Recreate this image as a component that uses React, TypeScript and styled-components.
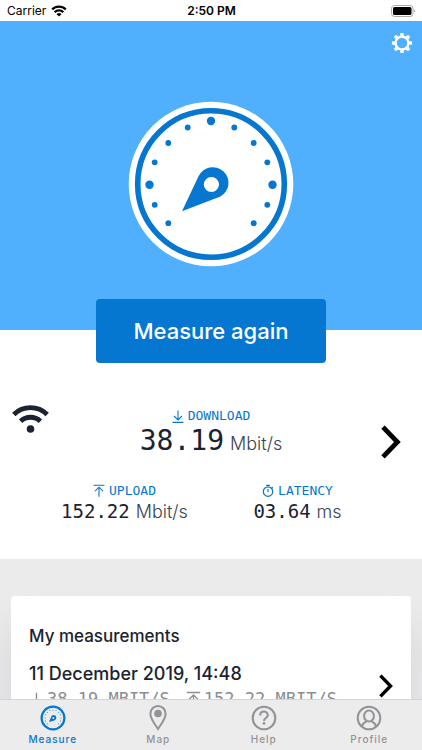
import React from "react";
import styled, { createGlobalStyle } from "styled-components";

const sans = `"Inter", "Liberation Sans", sans-serif`;
const mono = `"DejaVu Sans Mono", "Liberation Mono", monospace`;
const blue = "#0577d0";
const ink = "#1b2330";

const GlobalStyle = createGlobalStyle`
  *, *::before, *::after { box-sizing: border-box; }
  body { margin: 0; background: #ffffff; color: ${ink}; font-family: ${sans}; }
  button { border: 0; padding: 0; background: none; color: inherit; font: inherit; cursor: pointer; }
  h2, h3, p, dl, dt, dd { margin: 0; font: inherit; }
  svg { display: block; flex: none; }
`;

const Screen = styled.div`
  display: flex;
  flex-direction: column;
  height: 100vh;
  overflow: hidden;
`;

const StatusBar = styled.div`
  flex: none;
  display: grid;
  grid-template-columns: 1fr auto 1fr;
  align-items: center;
  height: 21px;
  padding: 0 6px 0 7px;
  background: #ffffff;
  color: #000000;
  font-size: 12px;
  line-height: 20px;
`;

const Carrier = styled.div`
  display: flex;
  align-items: center;
  gap: 5px;
`;

const Clock = styled.div`
  font-weight: 600;
`;

const BatterySlot = styled.div`
  display: flex;
  justify-content: flex-end;
`;

const Content = styled.main`
  flex: 1;
  min-height: 0;
  overflow: hidden;
  background: #ebebeb;
`;

const Hero = styled.section`
  display: flex;
  flex-direction: column;
  align-items: center;
  height: 309px;
  background: #50b0fe;
`;

const HeroBar = styled.div`
  align-self: stretch;
  display: flex;
  justify-content: flex-end;
  padding: 11px 9px 0;
  margin-bottom: 47px;
`;

const SettingsButton = styled.button`
  color: #ffffff;
`;

const Results = styled.section`
  display: flex;
  flex-direction: column;
  align-items: center;
  height: 229px;
  background: #ffffff;
`;

const MeasureButton = styled.button`
  flex: none;
  width: 230px;
  height: 64px;
  margin-top: -31px;
  border-radius: 4px;
  background: ${blue};
  color: #ffffff;
  font-size: 22px;
  font-weight: 500;
  line-height: 32px;
`;

const ResultRow = styled.div`
  align-self: stretch;
  display: grid;
  grid-template-columns: 38px 1fr 38px;
  padding: 41px 12px 0;
`;

const DetailsButton = styled.button`
  display: flex;
  align-self: start;
  justify-self: start;
  margin: 21px 0 0 9px;
  color: #000000;
`;

const Readings = styled.dl`
  display: grid;
  grid-template-columns: 1fr 1fr;
  column-gap: 24px;
  row-gap: 22px;
  padding-top: 4px;
`;

const Reading = styled.div<{ $main?: boolean }>`
  grid-column: ${({ $main }) => ($main ? "1 / -1" : "auto")};
  text-align: center;
`;

const ReadingLabel = styled.dt`
  display: flex;
  align-items: center;
  justify-content: center;
  gap: 4px;
  color: ${blue};
  font-family: ${mono};
  font-size: 13px;
  line-height: 16px;
`;

const ReadingValue = styled.dd<{ $main?: boolean }>`
  display: flex;
  align-items: baseline;
  justify-content: center;
  gap: 6px;
  font-family: ${mono};
  font-size: ${({ $main }) => ($main ? "28px" : "19px")};
  line-height: ${({ $main }) => ($main ? "34px" : "24px")};
  white-space: nowrap;
`;

const Unit = styled.span`
  color: #3d434e;
  font-family: ${sans};
  font-size: 18px;
  font-weight: 300;
`;

const History = styled.section`
  padding: 37px 11px 0 11px;
`;

const Card = styled.div`
  padding: 29px 18px 24px;
  border-radius: 4px;
  background: #ffffff;
  box-shadow: 0 32px 40px rgba(40, 50, 80, 0.12);
`;

const CardTitle = styled.h2`
  font-size: 17px;
  font-weight: 500;
  line-height: 22px;
`;

const Entry = styled.div`
  display: flex;
  justify-content: space-between;
  align-items: center;
  margin-top: 16px;
`;

const EntryDate = styled.h3`
  font-size: 18px;
  font-weight: 500;
  line-height: 22px;
`;

const EntryStats = styled.p`
  display: flex;
  gap: 16px;
  padding-top: 4px;
  color: #8b8e93;
  font-family: ${mono};
  font-size: 17px;
  line-height: 20px;
  white-space: nowrap;
`;

const EntryStat = styled.span`
  display: flex;
  align-items: center;
  gap: 3px;
`;

const EntryButton = styled.button`
  color: #000000;
`;

const TabBar = styled.nav`
  position: relative;
  flex: none;
  display: grid;
  grid-template-columns: repeat(4, 1fr);
  height: 51px;
  border-top: 1px solid #d4d4d4;
  background: #ececec;
`;

const Tab = styled.a<{ $active?: boolean }>`
  display: flex;
  flex-direction: column;
  align-items: center;
  gap: 2px;
  padding-top: 5px;
  color: ${({ $active }) => ($active ? blue : "#929397")};
  font-size: 10px;
  font-weight: 500;
  line-height: 12px;
  letter-spacing: 1px;
  text-decoration: none;
`;

const polar = (deg: number, r: number) => {
  const a = (deg * Math.PI) / 180;
  return { cx: Math.sin(a) * r, cy: -Math.cos(a) * r };
};

const Gauge = () => (
  <svg width="166" height="166" viewBox="-83 -83 166 166" aria-hidden="true">
    <circle r="82.3" fill="#fff" />
    <circle r="73.3" fill="none" stroke={blue} strokeWidth="5.6" />
    {[-90, 0, 90].map((d) => (
      <circle key={d} {...polar(d, 61.5)} cy={d === 0 ? -63 : 0.8} r="4.2" fill={blue} />
    ))}
    {[
      [23.3, -56.5],
      [42.7, -41],
      [56.3, -21.7],
      [56.3, 20.8],
      [42.7, 39.2],
    ].map(([x, y]) => (
      <g key={y} fill={blue}>
        <circle cx={x} cy={y} r="2.9" />
        <circle cx={-x} cy={y} r="2.9" />
      </g>
    ))}
    <path
      fill={blue}
      fillRule="evenodd"
      d="M-29 27.2L-12.6-7.4A15.7 15.7 0 1 1 9.4 12.6ZM.4-7.1a7.6 7.6 0 1 0 0 15.2a7.6 7.6 0 1 0 0-15.2Z"
    />
  </svg>
);

const StatusWifi = () => (
  <svg width="16" height="12" viewBox="0 0 16 12" aria-hidden="true">
    <path fill="none" stroke="#000" strokeWidth="2.3" d="M1.2 4.4a9.7 9.7 0 0 1 13.6 0M3.7 7.2a6.1 6.1 0 0 1 8.6 0" />
    <path d="M8 11.6L5.5 9.2a3.6 3.6 0 0 1 5 0Z" />
  </svg>
);

const Battery = () => (
  <svg width="25" height="12" viewBox="0 0 25 12" aria-hidden="true">
    <rect x=".5" y=".5" width="21.5" height="11" rx="3" fill="#fff" stroke="#aaa" />
    <rect x="2" y="2" width="18.5" height="8" rx="1.6" />
    <path d="M23.3 4.2q1.5 1.8 0 3.6Z" fill="#777" />
  </svg>
);

const Gear = () => (
  <svg width="22" height="22" viewBox="-11 -11 22 22" aria-hidden="true">
    <circle r="6.4" fill="none" stroke="currentColor" strokeWidth="2.3" />
    {[0, 45, 90, 135, 180, 225, 270, 315].map((d) => (
      <path key={d} transform={`rotate(${d})`} fill="currentColor" d="M-2.1-6.6L-1.5-10.1H1.5L2.1-6.6Z" />
    ))}
  </svg>
);

const Wifi = () => (
  <svg width="38" height="30" viewBox="0 0 38 30" aria-label="Wi-Fi">
    <path fill="none" stroke={ink} strokeWidth="4.8" d="M1.8 10.4a24.2 24.2 0 0 1 33.4 0M8.6 17.2a14.4 14.4 0 0 1 19.8 0" />
    <circle cx="18.5" cy="25" r="3.8" fill={ink} />
  </svg>
);

const DownIcon = ({ size = 12 }: { size?: number }) => (
  <svg width={size} height={size + 2} viewBox="0 0 12 14" fill="none" stroke="currentColor" strokeWidth="1.1" aria-hidden="true">
    <path d="M6 1.5V11M2 7l4 4 4-4M.5 13.4h11" />
  </svg>
);

const UpIcon = ({ size = 12 }: { size?: number }) => (
  <svg width={size} height={size + 2} viewBox="0 0 12 14" fill="none" stroke="currentColor" strokeWidth="1.1" aria-hidden="true">
    <path d="M6 12.8V3.2M2 7.2l4-4 4 4M.5 1.2h11" />
  </svg>
);

const TimerIcon = () => (
  <svg width="12" height="14" viewBox="0 0 12 14" fill="none" stroke="currentColor" strokeWidth="1.2" aria-hidden="true">
    <circle cx="6" cy="7.6" r="4.7" />
    <path d="M4.2 1.3h3.6M6 5v3M9.6 3l1.3 1.3" />
  </svg>
);

const Chevron = ({ size }: { size: number }) => (
  <svg width={(size * 20) / 34} height={size} viewBox="0 0 20 34" fill="none" stroke="currentColor" strokeWidth="4.8" aria-hidden="true">
    <path d="M2 2.2L16.4 17L2 31.8" />
  </svg>
);

const MeasureIcon = () => (
  <svg width="26" height="26" viewBox="-13 -13 26 26" aria-hidden="true">
    <circle r="11.4" fill="none" stroke="currentColor" strokeWidth="2.2" />
    {[-135, -112, -90, -67, -45, -22, 0, 22, 45, 67, 90, 112, 135].map((d) => (
      <circle key={d} {...polar(d, 8)} r=".5" fill="currentColor" />
    ))}
    <path fill="currentColor" fillRule="evenodd" d="M-4 4L-2-.8A2.7 2.7 0 1 1 1.3 2.4ZM.3-.9a1 1 0 1 0 0 2a1 1 0 1 0 0-2Z" />
  </svg>
);

const MapIcon = () => (
  <svg width="26" height="26" viewBox="-13 -13 26 26" aria-hidden="true">
    <path fill="none" stroke="currentColor" strokeWidth="2" d="M0 11C-3.5 5.5-7.6 1-7.6-4.3A7.6 7.6 0 0 1 7.6-4.3C7.6 1 3.5 5.5 0 11Z" />
    <circle cy="-4.5" r="3.8" fill="currentColor" />
  </svg>
);

const HelpIcon = () => (
  <svg width="26" height="26" viewBox="-13 -13 26 26" fill="none" stroke="currentColor" strokeWidth="2.1" aria-hidden="true">
    <circle r="11.3" />
    <path d="M-3.8-2.6C-3.8-7.7 3.8-7.7 3.8-2.8C3.8-.2 0-.2 0 3" />
    <circle cy="5.4" r="1.4" fill="currentColor" stroke="none" />
  </svg>
);

const ProfileIcon = () => (
  <svg width="26" height="26" viewBox="-13 -13 26 26" fill="none" stroke="currentColor" strokeWidth="2" aria-hidden="true">
    <circle r="11.3" />
    <ellipse cy="-2" rx="4.9" ry="5.6" />
    <path d="M-7.2 8.6C-6.5 5.4-4.8 4.5-2.6 3.4M7.2 8.6C6.5 5.4 4.8 4.5 2.6 3.4" />
  </svg>
);

const tabs = [
  { label: "Measure", href: "#measure", icon: <MeasureIcon /> },
  { label: "Map", href: "#map", icon: <MapIcon /> },
  { label: "Help", href: "#help", icon: <HelpIcon /> },
  { label: "Profile", href: "#profile", icon: <ProfileIcon /> },
];

const readings = [
  { label: "DOWNLOAD", value: "38.19", unit: "Mbit/s", icon: <DownIcon />, main: true },
  { label: "UPLOAD", value: "152.22", unit: "Mbit/s", icon: <UpIcon />, main: false },
  { label: "LATENCY", value: "03.64", unit: "ms", icon: <TimerIcon />, main: false },
];

export default function App() {
  return (
    <Screen>
      <GlobalStyle />
      <StatusBar>
        <Carrier>
          Carrier <StatusWifi />
        </Carrier>
        <Clock>2:50 PM</Clock>
        <BatterySlot>
          <Battery />
        </BatterySlot>
      </StatusBar>
      <Content>
        <Hero>
          <HeroBar>
            <SettingsButton aria-label="Settings">
              <Gear />
            </SettingsButton>
          </HeroBar>
          <Gauge />
        </Hero>
        <Results>
          <MeasureButton>Measure again</MeasureButton>
          <ResultRow>
            <Wifi />
            <Readings>
              {readings.map((r) => (
                <Reading key={r.label} $main={r.main}>
                  <ReadingLabel>
                    {r.icon}
                    {r.label}
                  </ReadingLabel>
                  <ReadingValue $main={r.main}>
                    {r.value}
                    <Unit>{r.unit}</Unit>
                  </ReadingValue>
                </Reading>
              ))}
            </Readings>
            <DetailsButton aria-label="Show result details">
              <Chevron size={34} />
            </DetailsButton>
          </ResultRow>
        </Results>
        <History>
          <Card>
            <CardTitle>My measurements</CardTitle>
            <Entry>
              <div>
                <EntryDate>11 December 2019, 14:48</EntryDate>
                <EntryStats>
                  <EntryStat>
                    <DownIcon size={15} />
                    38.19 MBIT/S
                  </EntryStat>
                  <EntryStat>
                    <UpIcon size={15} />
                    152.22 MBIT/S
                  </EntryStat>
                </EntryStats>
              </div>
              <EntryButton aria-label="Open measurement">
                <Chevron size={24} />
              </EntryButton>
            </Entry>
          </Card>
        </History>
      </Content>
      <TabBar>
        {tabs.map((t, i) => (
          <Tab key={t.label} href={t.href} $active={i === 0} aria-current={i === 0 ? "page" : undefined}>
            {t.icon}
            {t.label}
          </Tab>
        ))}
      </TabBar>
    </Screen>
  );
}
